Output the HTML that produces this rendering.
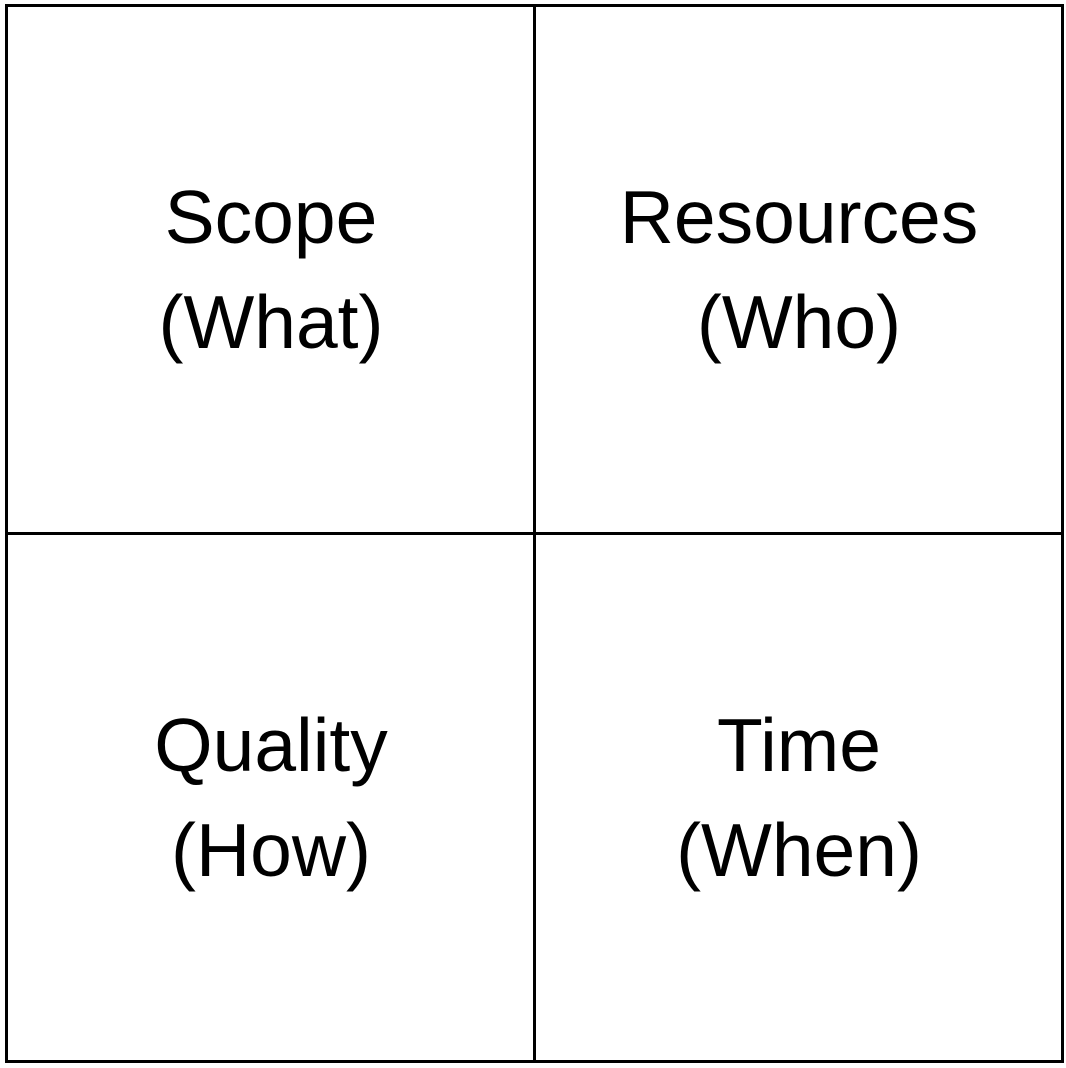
<!DOCTYPE html>
<html><head><style>
html,body{margin:0;padding:0;background:#fff;width:1066px;height:1068px;overflow:hidden}
.l{position:absolute;background:#000}
.c{position:absolute;width:526px;height:526px;display:flex;align-items:center;justify-content:center;text-align:center;font-family:"Liberation Sans",Arial,sans-serif;font-size:75px;line-height:105px;color:#000}
</style></head><body>
<div class="l" style="left:5px;top:4px;width:1059px;height:3px"></div>
<div class="l" style="left:5px;top:1060px;width:1059px;height:3px"></div>
<div class="l" style="left:5px;top:4px;width:3px;height:1059px"></div>
<div class="l" style="left:1061px;top:4px;width:3px;height:1059px"></div>
<div class="l" style="left:533px;top:4px;width:3px;height:1059px"></div>
<div class="l" style="left:5px;top:532px;width:1059px;height:3px"></div>
<div class="c" style="left:8px;top:7px">Scope<br>(What)</div>
<div class="c" style="left:536px;top:7px">Resources<br>(Who)</div>
<div class="c" style="left:8px;top:535px">Quality<br>(How)</div>
<div class="c" style="left:536px;top:535px">Time<br>(When)</div>
</body></html>
